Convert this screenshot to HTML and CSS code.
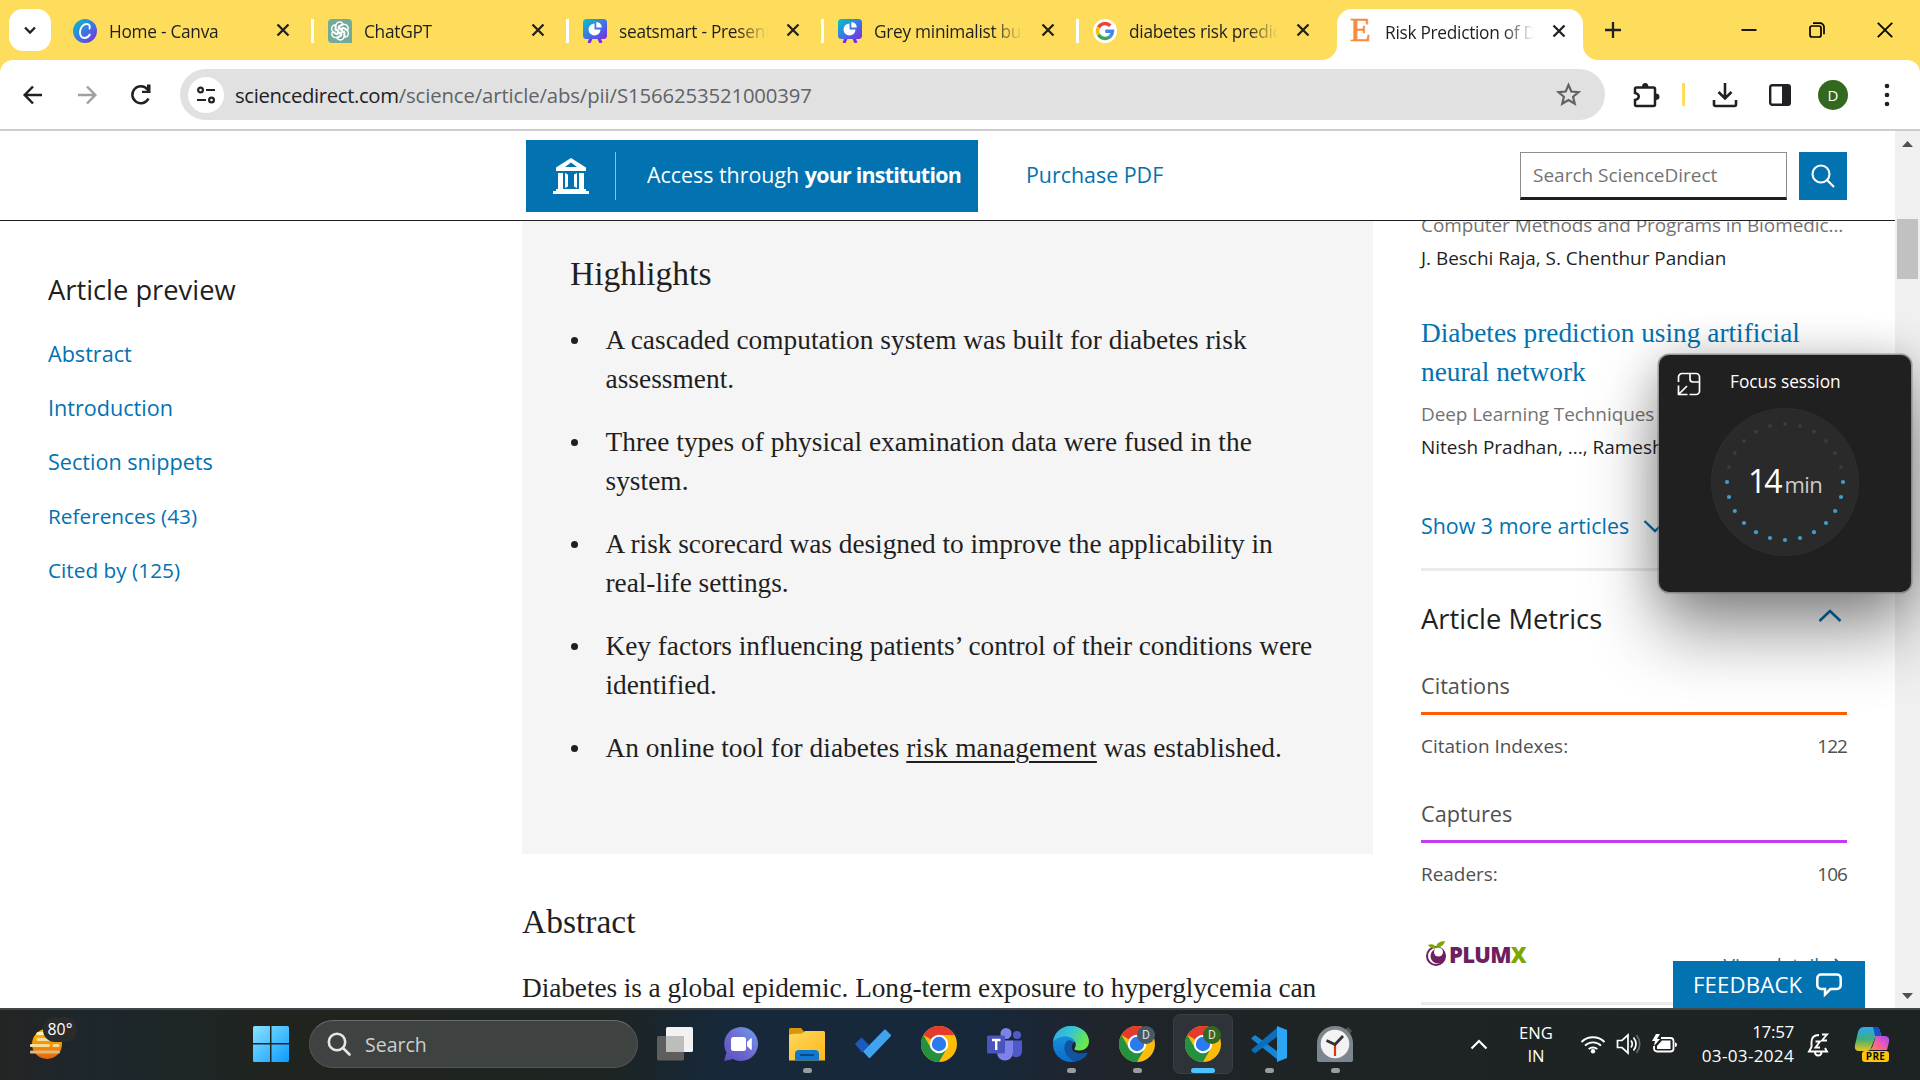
FILE: index.html
```html
<!DOCTYPE html>
<html lang="en">
<head>
<meta charset="utf-8">
<title>Risk Prediction of Diabetes</title>
<link rel="stylesheet" href="styles.css">
</head>
<body>
<svg class="defs" aria-hidden="true">
  <defs>
    <linearGradient id="g-canva" x1="0" y1="0" x2="1" y2="1"><stop offset="0" stop-color="#00c4cc"/><stop offset=".5" stop-color="#3a7ae0"/><stop offset="1" stop-color="#7d2ae8"/></linearGradient>
    <linearGradient id="g-win" x1="0" y1="0" x2="1" y2="1"><stop offset="0" stop-color="#8be3ff"/><stop offset="1" stop-color="#0a9bff"/></linearGradient>
    <linearGradient id="g-sun" x1="0" y1="0" x2="0" y2="1"><stop offset="0" stop-color="#ffc400"/><stop offset="1" stop-color="#e8640c"/></linearGradient>
    <linearGradient id="g-chat" x1="0" y1="1" x2="1" y2="0"><stop offset="0" stop-color="#5b4fc0"/><stop offset=".5" stop-color="#6f6bd0"/><stop offset="1" stop-color="#6aa0f0"/></linearGradient>
    <linearGradient id="g-folder" x1="0" y1="0" x2="1" y2="1"><stop offset="0" stop-color="#ffd75e"/><stop offset="1" stop-color="#fbb91a"/></linearGradient>
    <linearGradient id="g-edge" x1="0" y1="0" x2="1" y2=".4"><stop offset="0" stop-color="#2aa5e0"/><stop offset=".5" stop-color="#35c5d8"/><stop offset="1" stop-color="#6ae84a"/></linearGradient>
    <linearGradient id="g-edge2" x1="0" y1="0" x2="0" y2="1"><stop offset="0" stop-color="#1b9de2"/><stop offset="1" stop-color="#0a6cd0"/></linearGradient>
    <linearGradient id="g-co1" x1="0" y1="0" x2="0" y2="1"><stop offset="0" stop-color="#2aa8f5"/><stop offset=".5" stop-color="#3fae7a"/><stop offset="1" stop-color="#e8c61c"/></linearGradient>
    <linearGradient id="g-co2" x1="1" y1="0" x2="0" y2="1"><stop offset="0" stop-color="#a04af0"/><stop offset=".5" stop-color="#f05ab0"/><stop offset="1" stop-color="#ff8a3c"/></linearGradient>
    <symbol id="close" viewBox="0 0 24 24"><path d="M6.500 6.500l11 11M17.500 6.500l-11 11" fill="none" stroke="#202124" stroke-width="2.300"/></symbol>
    <symbol id="present" viewBox="0 0 24 24"><path d="M8.500 18l-2.500 6M15.500 18l2.500 6" stroke="#7d2ae8" stroke-width="3.200"/><rect width="24" height="20" rx="3.500" fill="url(#g-canva)"/><path d="M11.500 4.500a6 6 0 1 0 6 6h-6z" fill="#fff"/><path d="M13.300 3a5.500 5.500 0 0 1 5.500 5.500h-5.500z" fill="#fff"/></symbol>
    <symbol id="chrome" viewBox="0 0 36 36"><circle cx="18" cy="18" r="18" fill="#fbbc0a"/><path d="M18 18L2.400 9A18 18 0 0 1 33.600 9H18z" fill="#e33b2e"/><path d="M2.400 9A18 18 0 0 0 18 36L25.800 22.500 18 18 10.200 22.500z" fill="#23913f"/><circle cx="18" cy="18" r="9.200" fill="#fff"/><circle cx="18" cy="18" r="7.200" fill="#2b7bee"/></symbol>
  </defs>
</svg>

<header class="tabstrip">
  <button class="tab-search"><svg width="18" height="18" viewBox="0 0 18 18"><path d="M4 6.500l5 5 5-5" fill="none" stroke="#202124" stroke-width="2.300"/></svg></button>
  <div class="tab tab-first">
    <svg class="fav" viewBox="0 0 24 24"><circle cx="12" cy="12" r="12" fill="url(#g-canva)"/><path d="M16.500 9.500c1-2.500-.5-4.500-2.800-4.500C9.500 5 7 9.500 7 13.300 7 16.500 8.700 19 11.500 19c2.500 0 4.300-1.500 5.300-3.500" fill="none" stroke="#fff" stroke-width="1.900" stroke-linecap="round"/></svg>
    <span class="tab-title">Home - Canva</span><svg class="x"><use href="#close"/></svg>
  </div>
  <div class="tab">
    <svg class="fav" viewBox="0 0 24 24"><path d="M4 0h16a4 4 0 0 1 4 4v20H4a4 4 0 0 1-4-4V4a4 4 0 0 1 4-4z" fill="#74aa9c"/><g fill="none" stroke="#fff" stroke-width="1.300"><path id="petal" d="M12 9.200L8 11.500V6.800a3.800 3.800 0 0 1 7-2l-4.200 2.400v4.600"/><use href="#petal" transform="rotate(60 12 12)"/><use href="#petal" transform="rotate(120 12 12)"/><use href="#petal" transform="rotate(180 12 12)"/><use href="#petal" transform="rotate(240 12 12)"/><use href="#petal" transform="rotate(300 12 12)"/></g></svg>
    <span class="tab-title">ChatGPT</span><svg class="x"><use href="#close"/></svg>
  </div>
  <div class="tab">
    <svg class="fav"><use href="#present"/></svg>
    <span class="tab-title">seatsmart - Present</span><svg class="x"><use href="#close"/></svg>
  </div>
  <div class="tab">
    <svg class="fav"><use href="#present"/></svg>
    <span class="tab-title">Grey minimalist bus</span><svg class="x"><use href="#close"/></svg>
  </div>
  <div class="tab">
    <svg class="fav" viewBox="0 0 24 24"><circle cx="12" cy="12" r="12" fill="#fff"/><g fill="none" stroke-width="3.400"><path d="M17.300 6.700A7.500 7.500 0 0 0 5.500 8.300" stroke="#ea4335"/><path d="M5.500 8.300a7.500 7.500 0 0 0 0 7.400" stroke="#fbbc05"/><path d="M5.500 15.700a7.500 7.500 0 0 0 11.600 1.800" stroke="#34a853"/><path d="M17.100 17.500a7.500 7.500 0 0 0 2.400-5.300H12.300" stroke="#4285f4"/></g></svg>
    <span class="tab-title">diabetes risk predic</span><svg class="x"><use href="#close"/></svg>
  </div>
  <div class="tab active">
    <span class="elsevier">E</span>
    <span class="tab-title">Risk Prediction of D</span><svg class="x"><use href="#close"/></svg>
  </div>
  <svg class="plus" width="20" height="20" viewBox="0 0 20 20"><path d="M10 2v16M2 10h16" stroke="#202124" stroke-width="2.300"/></svg>
  <div class="winctl">
    <svg width="16" height="18" viewBox="0 0 16 18"><path d="M.5 9h15" stroke="#000" stroke-width="1.800"/></svg>
    <svg width="16" height="16" viewBox="0 0 16 16"><g fill="none" stroke="#000" stroke-width="1.700"><rect x="1" y="4" width="11" height="11" rx="2"/><path d="M4 1.200h7a4 4 0 0 1 4 4v7"/></g></svg>
    <svg width="16" height="16" viewBox="0 0 16 16"><path d="M.8.8l14.400 14.400M15.200.8L.8 15.200" stroke="#000" stroke-width="1.800"/></svg>
  </div>
</header>

<div class="toolbar-wrap">
<nav class="toolbar">
  <svg class="nav-ic" viewBox="0 0 24 24"><path d="M21 12H4M12 3.500L3.700 12l8.300 8.500" fill="none" stroke="#202124" stroke-width="2.500"/></svg>
  <svg class="nav-ic" viewBox="0 0 24 24"><path d="M3 12h17M12 3.500l8.300 8.500-8.300 8.500" fill="none" stroke="#a0a0a0" stroke-width="2.500"/></svg>
  <svg class="nav-ic" viewBox="0 0 24 24"><path d="M19.500 15.500A8.500 8.500 0 1 1 18.500 6.500L20 8.500" fill="none" stroke="#202124" stroke-width="2.500"/><path d="M21.500 1.500v8.500H13V7.800h5V1.500z" fill="#202124"/></svg>
  <div class="omnibox">
    <span class="site-info"><svg width="20" height="20" viewBox="0 0 20 20"><g fill="none" stroke="#202124" stroke-width="2.200"><circle cx="4.500" cy="5" r="2.400"/><path d="M10 5h9M1 15h9"/><circle cx="15.500" cy="15" r="2.400"/></g></svg></span>
    <span class="url"><b>sciencedirect.com</b>/science/article/abs/pii/S1566253521000397</span>
    <svg class="star" viewBox="0 0 24 24"><path d="M12 2.800l2.700 6.300 6.900.6-5.200 4.500 1.600 6.700-6-3.600-6 3.600 1.600-6.700-5.200-4.500 6.900-.6z" fill="none" stroke="#5f6368" stroke-width="2.100"/></svg>
  </div>
  <svg class="tool puzzle" width="28" height="28" viewBox="0 0 28 28"><path d="M4.500 6.500H21.500q1.500 0 1.500 1.500v15.500q0 1.500-1.500 1.500H4.500Q3 25 3 23.500v-4.500c5-1 5-6 0-7V8q0-1.500 1.500-1.500z" fill="none" stroke="#202124" stroke-width="2.500"/><path d="M10 6a3.200 4 0 0 1 6.400 0zM23.500 12.500a4 3.200 0 0 1 0 6.400z" fill="#202124"/></svg>
  <i class="bar"></i>
  <svg class="tool dl" width="26" height="26" viewBox="0 0 26 26"><path d="M13 1v15M6.500 10l6.500 6.500 6.500-6.500M2 18v4.500q0 1.500 1.500 1.500h19q1.500 0 1.500-1.500V18" fill="none" stroke="#202124" stroke-width="2.600"/></svg>
  <svg class="tool panel" width="22" height="22" viewBox="0 0 22 22"><rect x="1.200" y="1.200" width="19.600" height="19.600" rx="2" fill="none" stroke="#202124" stroke-width="2.400"/><path d="M13 1h7v20h-7z" fill="#202124"/></svg>
  <span class="avatar">D</span>
  <svg class="tool" width="6" height="26" viewBox="0 0 6 26"><g fill="#202124"><circle cx="3" cy="4" r="2.300"/><circle cx="3" cy="13" r="2.300"/><circle cx="3" cy="22" r="2.300"/></g></svg>
</nav>
</div>

<div class="viewport">
  <div class="page">
    <div class="sd-bar">
      <a class="access"><svg width="36" height="36" viewBox="0 0 36 36"><g fill="#fff"><path d="M18 0l15 9.500V13H3V9.500zM18 4.500l-6 4.500h12z" fill-rule="evenodd"/><path d="M5 15h5v16H5zM26 15h5v16h-5zM3 31h30v2H3zM0 33h36v3H0z"/><path d="M12 15l3 1.500v12L12 30zM24 15l-3 1.500v12L24 30z"/></g></svg><span class="access-t">Access through <b>your institution</b></span></a>
      <a class="purchase">Purchase PDF</a>
      <div class="sd-search"><span class="field">Search ScienceDirect</span><span class="go"><svg width="24" height="24" viewBox="0 0 24 24"><g fill="none" stroke="#fff" stroke-width="2.100"><circle cx="10" cy="10" r="8.500"/><path d="M16 16l7 7"/></g></svg></span></div>
    </div>
    <div class="cols">
      <aside class="toc">
        <h2>Article preview</h2>
        <a>Abstract</a><a>Introduction</a><a>Section snippets</a><a class="num">References (43)</a><a class="num">Cited by (125)</a>
      </aside>
      <main class="article">
        <section class="highlights">
          <h3>Highlights</h3>
          <ul>
            <li>A cascaded computation system was built for diabetes risk<br>assessment.</li>
            <li>Three types of physical examination data were fused in the<br>system.</li>
            <li class="tight">A risk scorecard was designed to improve the applicability in<br>real-life settings.</li>
            <li class="tight">Key factors influencing patients’ control of their conditions were<br>identified.</li>
            <li>An online tool for diabetes <u>risk management</u> was established.</li>
          </ul>
        </section>
        <h3 class="abs">Abstract</h3>
        <p>Diabetes is a global epidemic. Long-term exposure to hyperglycemia can</p>
      </main>
      <aside class="related">
        <div class="journal first">Computer Methods and Programs in Biomedic...</div>
        <div class="authors">J. Beschi Raja, S. Chenthur Pandian</div>
        <a class="rel-title">Diabetes prediction using artificial<br>neural network</a>
        <div class="journal">Deep Learning Techniques for</div>
        <div class="authors">Nitesh Pradhan, ..., Ramesh</div>
        <a class="more">Show 3 more articles <svg width="24" height="14" viewBox="0 0 24 14"><path d="M1.500 2L12 12 22.500 2" fill="none" stroke="#0272b1" stroke-width="2.400"/></svg></a>
        <hr>
        <h2 class="metrics">Article Metrics <svg width="24" height="14" viewBox="0 0 24 14"><path d="M1.500 12L12 2l10.500 10" fill="none" stroke="#0272b1" stroke-width="2.600"/></svg></h2>
        <h4 class="cit">Citations</h4>
        <div class="row"><span>Citation Indexes:</span><span class="n">122</span></div>
        <h4 class="cap">Captures</h4>
        <div class="row"><span>Readers:</span><span class="n">106</span></div>
        <div class="plum-row">
          <span class="plumx"><svg width="22" height="25" viewBox="0 0 22 25"><circle cx="10" cy="15" r="9" fill="none" stroke="#6d1f5f" stroke-width="2"/><circle cx="12" cy="15" r="7.500" fill="#6d1f5f"/><circle cx="12.500" cy="11" r="4.500" fill="#fff"/><path d="M10 7c0-4 3-7 9-7-1 4-4 6.500-9 7zM10 7C9 3.500 6 2.500 2 4c2 3 5 4 8 3z" fill="#7ba800"/></svg><b>PLUM<i>X</i></b></span>
          <a class="details">View details <svg width="9" height="15" viewBox="0 0 9 15"><path d="M1 1l6.500 6.500L1 14" fill="none" stroke="#0272b1" stroke-width="2"/></svg></a>
        </div>
        <hr class="last">
      </aside>
    </div>
    <a class="feedback">FEEDBACK <svg width="26" height="24" viewBox="0 0 26 24"><path d="M5 1.500h16a3.700 3.700 0 0 1 3.700 3.700v7.100A3.700 3.700 0 0 1 21 16h-6.500L9 21.500V16H5a3.700 3.700 0 0 1-3.700-3.700V5.200A3.700 3.700 0 0 1 5 1.500z" fill="none" stroke="#fff" stroke-width="2.500"/></svg></a>
  </div>
  <div class="scroll"><svg width="11" height="6" viewBox="0 0 11 6"><path d="M5.500 0L11 6H0z" fill="#505050"/></svg><i></i><svg class="down" width="11" height="6" viewBox="0 0 11 6"><path d="M5.500 6L11 0H0z" fill="#505050"/></svg></div>
</div>

<div class="focus">
  <div class="focus-h"><svg width="24" height="24" viewBox="0 0 24 24"><g fill="none" stroke="#fff" stroke-width="1.700"><path d="M1.500 10V5a3.500 3.500 0 0 1 3.500-3.500h14A3.500 3.500 0 0 1 22.500 5v14a3.500 3.500 0 0 1-3.500 3.500h-6.500M13 1.500V7a3 3 0 0 0 3 3h6.500M1.500 13.500v9h9M1.500 22.500l8.500-8.500"/></g></svg><span>Focus session</span></div>
  <div class="dial">
    <svg width="148" height="148" viewBox="-74 -74 148 148">
      <circle r="73.500" fill="#2a2a2a" stroke="#2f2f2f"/>
      <g fill="#3c3c3c"><circle cx="56" cy="-15" r="2"/><circle cx="50.200" cy="-29" r="2"/><circle cx="41" cy="-41" r="2"/><circle cx="29" cy="-50.200" r="2"/><circle cx="15" cy="-56" r="2"/><circle cx="0" cy="-58" r="2"/><circle cx="-15" cy="-56" r="2"/><circle cx="-29" cy="-50.200" r="2"/><circle cx="-41" cy="-41" r="2"/><circle cx="-50.200" cy="-29" r="2"/><circle cx="-56" cy="-15" r="2"/></g>
      <g fill="#429ccf"><circle cx="58" cy="0" r="2.100"/><circle cx="56" cy="15" r="2.100"/><circle cx="50.200" cy="29" r="2.100"/><circle cx="41" cy="41" r="2.100"/><circle cx="29" cy="50.200" r="2.100"/><circle cx="15" cy="56" r="2.100"/><circle cx="0" cy="58" r="2.100"/><circle cx="-15" cy="56" r="2.100"/><circle cx="-29" cy="50.200" r="2.100"/><circle cx="-41" cy="41" r="2.100"/><circle cx="-50.200" cy="29" r="2.100"/><circle cx="-56" cy="15" r="2.100"/><circle cx="-58" cy="0" r="2.100"/></g>
    </svg>
    <div class="time"><b>14</b><span>min</span></div>
  </div>
</div>

<footer class="taskbar">
  <div class="weather">
    <svg width="32" height="32" viewBox="0 0 32 32"><circle cx="17" cy="16" r="15" fill="url(#g-sun)"/><g stroke-width="3.200" stroke-linecap="round" stroke="#f7dc9a"><path d="M8 5.500h10" stroke="#fff0b0"/><path d="M8 11.500h18"/><path d="M1.500 17.500h17M24 17.500h4"/><path d="M1.500 24h27" stroke="#e0b878"/></g></svg><span>80°</span>
  </div>
  <svg class="start" width="36" height="36" viewBox="0 0 36 36"><path d="M1.500 0H17v17H0V1.500A1.500 1.500 0 0 1 1.500 0zM18.500 0H34.500A1.500 1.500 0 0 1 36 1.500V17H18.500zM0 18.500h17V36H1.500A1.500 1.500 0 0 1 0 34.500zM18.500 18.500H36v16a1.500 1.500 0 0 1-1.500 1.500h-16z" fill="url(#g-win)"/></svg>
  <div class="tb-search"><svg width="24" height="24" viewBox="0 0 24 24"><g fill="none" stroke="#e6e6e6" stroke-width="2.600" stroke-linecap="round"><circle cx="10" cy="10" r="8.200"/><path d="M16 16l6.500 6.500"/></g></svg><span>Search</span></div>
  <div class="apps">
    <div class="app"><svg viewBox="0 0 36 36"><rect x="0" y="10" width="27" height="24.500" rx="1.500" fill="#5e5e5e"/><rect x="9" y="1" width="27" height="25" rx="1.500" fill="#f2f2f2"/><path d="M9 10h18v16H9z" fill="#bdbdbd"/></svg></div>
    <div class="app"><svg viewBox="0 0 36 36"><path d="M18 1a17 17 0 1 1-8 32L1 35l2.500-8.500A17 17 0 0 1 18 1z" fill="url(#g-chat)"/><rect x="8" y="11" width="15" height="14" rx="2.500" fill="#fff"/><path d="M24 16l4-4q.8 0 .8 1v10q0 1-.8 1l-4-4z" fill="#fff"/></svg></div>
    <div class="app run"><svg viewBox="0 0 36 36"><path d="M0 3.500Q0 2 1.500 2H12l3 3.500V12H0z" fill="#d9970a"/><path d="M0 9l3-1 10-.5 3-2.500h18.500Q36 5 36 6.500V34.500H0z" fill="url(#g-folder)"/><path d="M6 34.500V28a4 4 0 0 1 4-4h16a4 4 0 0 1 4 4v6.500z" fill="#0f78d0"/><path d="M11 29h14" stroke="#0a4a80" stroke-width="2"/></svg></div>
    <div class="app"><svg viewBox="0 0 36 36"><path d="M0 18l6.500-6.500L14 19l-7 7.500z" fill="#1959c0"/><path d="M8 25.500L29 4q1-1 2 0l4.500 4.500q1 1 0 2L15.500 31.500q-1 1-2 0z" fill="#41a3ee"/></svg></div>
    <div class="app"><svg><use href="#chrome"/></svg></div>
    <div class="app"><svg viewBox="0 0 36 36"><circle cx="19" cy="7.500" r="5.500" fill="#7b83eb"/><circle cx="30" cy="9" r="4" fill="#5059c9"/><path d="M24 14.500h11v11a6 6 0 0 1-9 5z" fill="#5059c9"/><path d="M10 14.500h16v12a8 8 0 0 1-16 0z" fill="#7b83eb"/><rect y="9.500" width="18" height="18" rx="1.500" fill="#4b53bc"/><path d="M5 14h8.500M9.200 14v10" stroke="#fff" stroke-width="2.400"/></svg></div>
    <div class="app run"><svg viewBox="0 0 36 36"><circle cx="18" cy="18" r="18" fill="url(#g-edge2)"/><path d="M14 15c-6 7-1 17 8 20.400 5-1.300 9-4.500 11.500-8.900-5 2-11 2-14-2-2-3-1-6 1-8-2-2-4.500-3-6.500-1.500z" fill="#10549f"/><path d="M36 15.500v10l-2.500 1c-4 1.700-11 1.700-14-2-2-3-.5-6.500 1.500-8.500z" fill="#1f252c"/><path d="M33.500 26.500C31 31 27 34 22 35.400c5-.4 10-3.400 12.500-8z" fill="#10549f"/><path d="M0 16C1 6 9 0 18 0c10 0 18 7 18 15.500 0 6-5 9-9.500 9-4 0-5.500-1-5-2 3-4 .5-10-5.500-11.500C9 9.500 3 12 0 16z" fill="url(#g-edge)"/></svg></div>
    <div class="app run"><svg><use href="#chrome"/></svg><em>D</em></div>
    <div class="app run on"><svg><use href="#chrome"/></svg><em class="green">D</em></div>
    <div class="app run"><svg viewBox="0 0 36 36"><path d="M0 12.500l4-3.500L27 26v8z" fill="#1487d4"/><path d="M0 24l4 3.500L27 10V1z" fill="#0a6fb8"/><path d="M26 0l10 4v28l-10 4z" fill="#2aa6f5"/></svg></div>
    <div class="app run"><svg viewBox="0 0 36 36"><path d="M28 4l3-3 4 4-3 4z" fill="#55504e"/><path d="M0 17a18 17 0 0 1 36 0v17q0 2-2 2H2q-2 0-2-2z" fill="#7b868f"/><circle cx="18" cy="18" r="14.300" fill="#f3f3f3"/><path d="M18 19v11" stroke="#d83b01" stroke-width="2.200"/><path d="M9.500 14.500l8.500 4 8-8.500" fill="none" stroke="#333" stroke-width="2.800"/></svg></div>
  </div>
  <svg class="chev" width="18" height="11" viewBox="0 0 18 11"><path d="M1.500 9.500L9 2l7.500 7.500" fill="none" stroke="#fff" stroke-width="2.200"/></svg>
  <div class="lang">ENG<br>IN</div>
  <div class="sys">
    <svg width="26" height="20" viewBox="0 0 26 20"><g fill="none" stroke="#fff" stroke-width="1.900"><path d="M1.500 8a16.300 16.300 0 0 1 23 0M5 11.700a11.300 11.300 0 0 1 16 0M8.700 15.200a6.100 6.100 0 0 1 8.600 0"/></g><circle cx="13" cy="17.300" r="2.200" fill="#fff"/></svg>
    <svg width="26" height="22" viewBox="0 0 26 22"><g fill="none" stroke="#fff" stroke-width="1.700"><path d="M1.500 7.500H6l6-5.500v18l-6-5.500H1.500z"/><path d="M15 7.500q2.500 3.500 0 7M17.500 4.500q5 6.500 0 13"/><path d="M20.500 2q6.500 9 0 18" stroke="#666"/></g></svg>
    <svg width="26" height="22" viewBox="0 0 26 22"><path d="M9 5h9.500a3 3 0 0 1 3 3v7.500a3 3 0 0 1-3 3H5a3 3 0 0 1-3-3V13" fill="none" stroke="#fff" stroke-width="1.800"/><path d="M10 7.500h8.500v8.500H5v-3zM23 9.500q2 0 2 2.200T23 14z" fill="#fff"/><path d="M4 1L0 8h3l-1 5 6-7H5l3-5z" fill="#fff"/></svg>
  </div>
  <div class="clock">17:57<br><span>03-03-2024</span></div>
  <svg class="bell" width="24" height="26" viewBox="0 0 24 26"><path d="M12 4C7 4 4.500 7 4.500 11v5L2 20.500h18L18 17M8 21q0 3.500 3.200 3.500T14.500 21" fill="none" stroke="#fff" stroke-width="1.900"/><path d="M8.500 10.500H13l-4.500 6H13M15 3.500h5l-5 6h5" fill="none" stroke="#fff" stroke-width="1.900"/></svg>
  <div class="copilot"><svg width="36" height="36" viewBox="0 0 36 36"><path d="M10 1h11q4 0 5 4l2 7h-7l-4 10q-1 3-4 3H5q-5 0-4-6L4 6q1.500-5 6-5z" fill="url(#g-co1)"/><path d="M19 1h3q3 0 4 4l1 5h-6q-1-6-2-9z" fill="#1750c8"/><path d="M22 10h9q5 0 4 6l-2 8H15q3-1 4-5z" fill="url(#g-co2)"/></svg><b>PRE</b></div>
</footer>
</body>
</html>
```

FILE: styles.css
```css
* { box-sizing: border-box; margin: 0; padding: 0; }
body { width: 1920px; height: 1080px; overflow: hidden; display: flex; flex-direction: column; background: #fff; color: #1f1f1f; font-family: "Open Sans", "Noto Sans", sans-serif; white-space: nowrap; }
svg { display: block; flex: none; }
.defs { position: absolute; width: 0; height: 0; }

/* browser tabs */
.tabstrip { height: 60px; background: #ffdd5c; display: flex; align-items: center; padding-left: 9px; flex: none; }
.tab-search { width: 42px; height: 42px; border: 0; border-radius: 14px; background: #fff; display: grid; place-items: center; margin-right: 5px; }
.tab { width: 255px; height: 24px; border-left: 3px solid #fff; margin-top: 2px; display: flex; align-items: center; padding: 0 15px 0 14px; }
.tab-first { border-color: transparent; }
.fav { width: 24px; height: 24px; margin: -1px 12px 0 0; }
.tab-title { width: 149px; height: 26px; line-height: 28px; font-size: 17.3px; letter-spacing: -.28px; overflow: hidden; -webkit-mask-image: linear-gradient(90deg, #000 118px, transparent 149px); mask-image: linear-gradient(90deg, #000 118px, transparent 149px); margin-right: 13px; }
.x { width: 24px; height: 24px; margin-top: -2px; }
.active { width: 246px; height: 51px; margin: 9px 0 0 6px; background: #fff; border: 0; border-radius: 15px 15px 0 0; padding: 0 12px 6px 13px; position: relative; }
.active::before, .active::after { content: ""; position: absolute; bottom: 0; width: 15px; height: 15px; }
.active::before { left: -15px; background: radial-gradient(circle at 0 0, #ffdd5c 14.5px, #fff 15.5px); }
.active::after { right: -15px; background: radial-gradient(circle at 100% 0, #ffdd5c 14.5px, #fff 15.5px); }
.elsevier { width: 22px; font: 34px/22px "Liberation Serif", serif; color: #f68b3c; margin: -3px 13px 0 0; -webkit-text-stroke: .6px #f68b3c; }
.plus { margin-left: 20px; }
.winctl { display: flex; align-items: center; gap: 52px; margin: 0 27px 0 auto; }

/* toolbar */
.toolbar-wrap { background: #ffdd5c; flex: none; }
.toolbar { height: 71px; background: #fff; border-bottom: 2px solid #ccc; border-radius: 13px 13px 0 0; display: flex; align-items: center; padding: 0 30px 0 21px; }
.nav-ic { width: 24px; height: 24px; margin-right: 30px; }
.nav-ic:nth-child(3) { margin-right: 27px; }
.omnibox { width: 1425px; height: 51px; border-radius: 26px; background: #e1e1e1; display: flex; align-items: center; padding: 0 24px 0 8px; margin-right: 27px; }
.site-info { width: 36px; height: 36px; border-radius: 50%; background: #fff; display: grid; place-items: center; margin-right: 11px; }
.url { font-size: 20.3px; letter-spacing: -.1px; color: #5f6368; }
.url b { font-weight: 400; color: #202124; letter-spacing: -.35px; }
.star { width: 25px; height: 25px; margin-left: auto; }
.bar { width: 3px; height: 23px; background: #ffdd5c; margin: 0 27px 0 22px; }
.dl { margin-right: 31px; }
.panel { margin-right: 27px; }
.avatar { width: 30px; height: 30px; border-radius: 50%; background: #33691e; color: #fff; font-size: 15px; line-height: 30px; text-align: center; margin-right: 36px; }

/* page */
.viewport { height: 877px; display: flex; flex: none; }
.page { width: 1895px; overflow: hidden; position: relative; display: flex; flex-direction: column; }
.sd-bar { height: 90px; border-bottom: 1px solid #1f1f1f; display: flex; align-items: center; padding: 0 48px 0 526px; flex: none; }
.access { width: 452px; height: 72px; margin-top: 1px; background: #0272b1; color: #fff; display: flex; align-items: center; padding-left: 27px; font-size: 21.4px; }
.access-t { border-left: 1px solid #8fc1de; height: 48px; line-height: 45px; margin-left: 26px; padding-left: 31px; }
.access-t b { letter-spacing: -.75px; }
.purchase { color: #0272b1; font-size: 21.4px; margin: -3px 0 0 48px; }
.sd-search { display: flex; gap: 12px; margin: 1px 0 0 auto; }
.field { width: 267px; height: 48px; border: 1px solid #8e8e8e; border-bottom: 3px solid #1f1f1f; padding-left: 12px; font-size: 19px; line-height: 44px; color: #737373; }
.go { width: 48px; height: 48px; background: #0272b1; display: grid; place-items: center; }
.cols { display: flex; height: 787px; overflow: hidden; }
.toc { width: 522px; padding: 49px 0 0 48px; flex: none; }
h2 { font-size: 27.3px; font-weight: 400; line-height: 40px; }
.toc a { display: block; color: #0272b1; font-size: 21.6px; line-height: 54px; }
.toc h2 { margin-bottom: 17px; }
.toc .num { font-size: 20.8px; }
.article { width: 851px; flex: none; font-family: "Liberation Serif", serif; font-size: 27.35px; line-height: 39px; }
.highlights { height: 633px; background: #f5f5f5; padding: 33px 48px 0; }
h3 { font-size: 33.5px; font-weight: 400; line-height: 40px; }
.highlights ul { list-style: none; margin-top: 27px; display: flex; flex-direction: column; gap: 24px; }
.highlights li { padding-left: 35.5px; position: relative; letter-spacing: .03px; }
.highlights .tight { letter-spacing: -.03px; }
.highlights li::before { content: ""; position: absolute; left: 1px; top: 16px; width: 7px; height: 7px; border-radius: 50%; background: #1f1f1f; }
.highlights u { text-decoration-thickness: 1.5px; text-underline-offset: 4px; letter-spacing: .2px; }
.abs { margin: 48px 0 27px; }
.article p { letter-spacing: -.08px; }
.related { width: 426px; margin-left: 48px; font-size: 18.95px; line-height: 33px; color: #505050; display: flex; flex-direction: column; }
.related > * { flex: none; }
.journal { color: #737373; letter-spacing: -.05px; }
.first { margin-top: -12px; }
.authors { color: #1f1f1f; }
.rel-title { font: 27.35px/39px "Liberation Serif", serif; color: #0272b1; margin: 39px 0 6px; }
.more { color: #0272b1; font-size: 21.4px; line-height: 40px; margin: 42px 0 22px; display: flex; align-items: center; gap: 14px; }
hr { border: 0; height: 3px; background: #ebebeb; }
.metrics { margin: 28px 0 28px; color: #1f1f1f; display: flex; justify-content: space-between; padding-right: 5px; }
.metrics svg { margin-top: 10px; }
h4 { font-size: 21.7px; font-weight: 400; line-height: 38px; padding-bottom: 7px; margin-bottom: 15px; border-bottom: 3px solid #ff5c0a; }
.cap { margin-top: 32px; border-color: #c43cf0; }
.row { display: flex; justify-content: space-between; }
.n { letter-spacing: -.9px; }
.plum-row { display: flex; justify-content: space-between; margin-top: 50px; height: 61px; }
.plumx { display: flex; gap: 1px; padding-left: 5px; color: #6d1f5f; }
.plumx b { font: 800 22px/27px "Open Sans", sans-serif; letter-spacing: -.7px; }
.plumx i { font-style: normal; color: #7ba800; }
.details { color: #0272b1; margin-top: 8px; padding-right: 4px; display: flex; align-items: center; height: 33px; gap: 6px; }
.feedback { position: absolute; left: 1673px; bottom: 0; width: 192px; height: 47px; background: #0272b1; color: #fff; font-size: 22.2px; line-height: 47px; display: flex; align-items: center; justify-content: space-between; padding: 0 23px 0 20px; letter-spacing: .15px; }
.scroll { width: 25px; background: #f0f0f0; display: flex; flex-direction: column; align-items: center; padding: 10px 0 9px; }
.scroll i { width: 21px; height: 60px; background: #c1c1c1; margin-top: 72px; }
.scroll .down { margin-top: auto; }

/* floating focus timer */
.focus { position: absolute; left: 1659px; top: 355px; width: 252px; height: 237px; border-radius: 10px; background: #202020; box-shadow: 0 0 0 1.5px rgba(110,110,110,.6), 0 40px 70px rgba(0,0,0,.42), 0 2px 45px rgba(0,0,0,.22); color: #fff; }
.focus-h { display: flex; height: 53px; padding: 16px 0 0 18px; font-size: 17.3px; line-height: 22px; }
.focus-h span { margin-left: 29px; }
.focus-h svg { margin-top: 1px; }
.dial { width: 148px; height: 148px; margin-left: 52px; display: grid; }
.dial > * { grid-area: 1 / 1; }
.time { padding-top: 50px; line-height: 46px; text-align: center; color: #ccc; font-size: 22px; letter-spacing: -.6px; }
.time b { font-size: 32px; font-weight: 400; color: #fff; letter-spacing: -2px; margin-right: 4px; }

/* taskbar */
.taskbar { height: 72px; border-top: 2px solid #44474a; background: linear-gradient(90deg, #242424 0, #1c272d 90px, #20241f 280px, #1e2421 600px, #16283a 720px, #16283a 980px, #20242c 1100px, #1e2424 1320px, #1d2322); display: flex; align-items: center; padding: 0 30px 2px; flex: none; color: #fff; }
.weather { width: 48px; position: relative; margin-top: -1px; }
.weather span { position: absolute; left: 13px; top: -11px; width: 34px; height: 25px; border-radius: 12px; background: #2b2b2b; font-size: 15.8px; line-height: 25px; text-align: center; }
.start { margin: 0 20px 0 175px; }
.tb-search { width: 329px; height: 48px; border-radius: 24px; background: #3e4341; border: 1px solid #525654; border-top-color: #666a68; display: flex; align-items: center; padding-left: 17px; gap: 14px; font-size: 19.5px; color: #cfcfcf; }
.apps { display: flex; gap: 6px; margin-left: 7px; }
.app { width: 60px; height: 60px; border-radius: 7px; display: grid; place-items: center; position: relative; }
.app svg { width: 36px; height: 36px; }
.run::after { content: ""; position: absolute; bottom: 1px; width: 9px; height: 5px; border-radius: 3px; background: #9a9da0; }
.on { background: #2d3338; border: 1px solid #393f43; }
.on::after { width: 24px; background: #4cc2ff; bottom: 0; }
.app em { position: absolute; left: 30px; top: 12px; width: 18px; height: 18px; border-radius: 50%; background: #455a64; font: 12px/18px Roboto, sans-serif; text-align: center; color: #ddd; }
.app .green { background: #33691e; left: 29px; top: 11px; }
.chev { margin-left: 105px; }
.lang { margin-left: 31px; width: 34px; text-align: center; font-size: 16.6px; line-height: 23px; }
.sys { display: flex; gap: 10px; margin-left: 27px; align-items: center; }
.clock { margin-left: auto; text-align: right; font-size: 17.1px; line-height: 24px; letter-spacing: -.35px; }
.clock span { letter-spacing: .3px; }
.bell { margin-left: 13px; }
.copilot { width: 36px; height: 36px; margin-left: 23px; position: relative; }
.copilot b { position: absolute; left: 8px; bottom: 0; width: 27px; height: 11px; border-radius: 3px; background: #fdc60c; color: #111; font-size: 10px; line-height: 11px; text-align: center; letter-spacing: .3px; }
```
